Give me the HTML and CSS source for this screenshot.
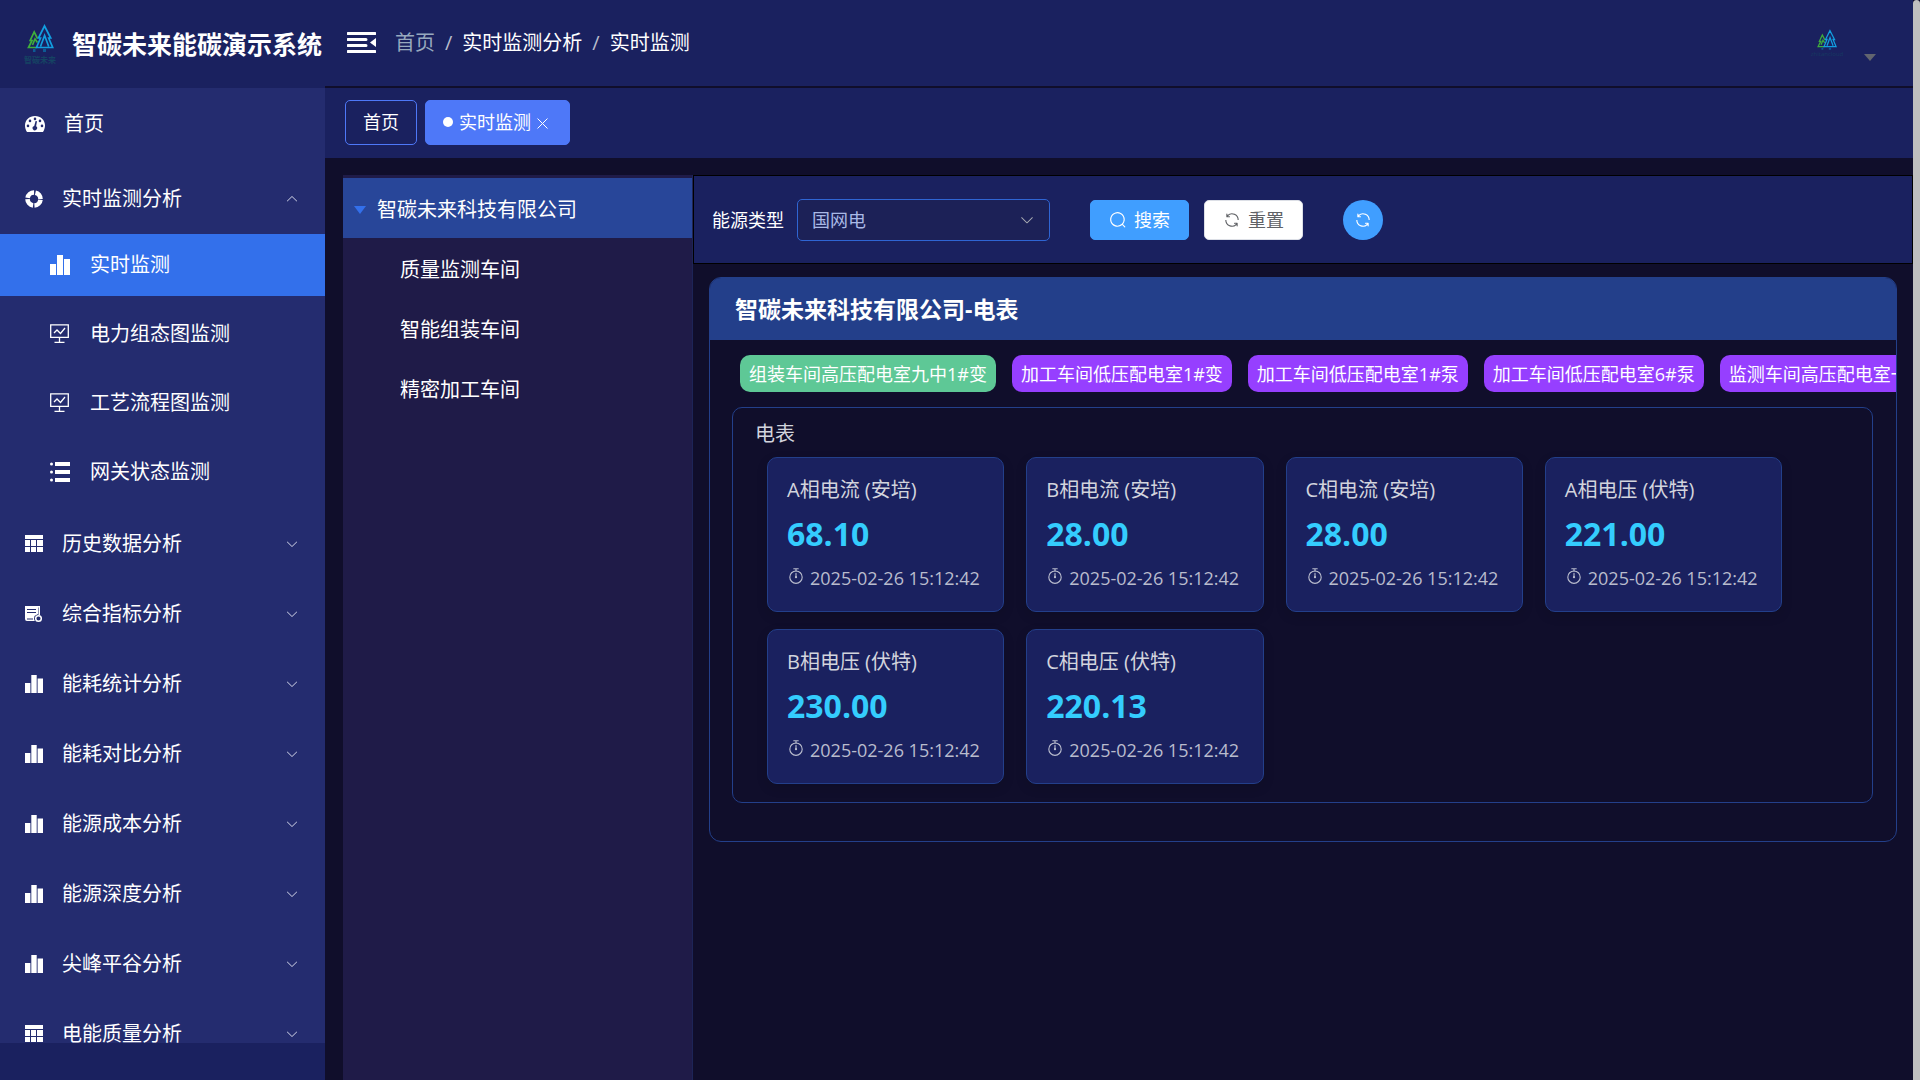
FILE: index.html
```html
<!DOCTYPE html>
<html lang="zh-CN">
<head>
<meta charset="utf-8">
<title>智碳未来能碳演示系统</title>
<link rel="stylesheet" href="styles.css">
</head>
<body>
<svg class="sprite" aria-hidden="true">
  <symbol id="i-down" viewBox="0 0 1024 1024"><path d="M831.872 340.864 512 652.672 192.128 340.864a30.592 30.592 0 0 0-42.752 0 29.12 29.12 0 0 0 0 41.6L489.664 714.24a32 32 0 0 0 44.672 0l340.288-331.712a29.12 29.12 0 0 0 0-41.728 30.592 30.592 0 0 0-42.752 0z"/></symbol>
  <symbol id="i-search" viewBox="0 0 1024 1024"><path d="m795.904 750.72 124.992 124.928a32 32 0 0 1-45.248 45.248L750.656 795.904a416 416 0 1 1 45.248-45.248zM480 832a352 352 0 1 0 0-704 352 352 0 0 0 0 704"/></symbol>
  <symbol id="i-refresh" viewBox="0 0 1024 1024"><path d="M771.776 794.88A384 384 0 0 1 128 512h64a320 320 0 0 0 555.712 216.448H654.72a32 32 0 1 1 0-64h149.056a32 32 0 0 1 32 32v148.928a32 32 0 1 1-64 0v-50.56zM276.288 295.616h92.992a32 32 0 0 1 0 64H220.16a32 32 0 0 1-32-32V178.56a32 32 0 0 1 64 0v50.56A384 384 0 0 1 896.128 512h-64a320 320 0 0 0-555.776-216.384z"/></symbol>
  <symbol id="i-timer" viewBox="0 0 1024 1024"><path d="M512 896a320 320 0 1 0 0-640 320 320 0 0 0 0 640m0 64a384 384 0 1 1 0-768 384 384 0 0 1 0 768"/><path d="M512 320a32 32 0 0 1 32 32l-.512 224a32 32 0 1 1-64 0L480 352a32 32 0 0 1 32-32"/><path d="M448 576a64 64 0 1 0 128 0 64 64 0 1 0-128 0m96-448v128h-64V128h-96a32 32 0 0 1 0-64h256a32 32 0 1 1 0 64z"/></symbol>
  <symbol id="i-bars" viewBox="0 0 20 20"><path d="M0 9h6v11H0zM7 0h6v20H7zM14 4h6v16h-6z"/></symbol>
  <symbol id="i-table" viewBox="0 0 18 18"><path d="M0 0h18v4H0zM0 5h5v6H0zM6 5h5v6H6zM12 5h6v6h-6zM0 12h5v5H0zM6 12h5v5H6zM12 12h6v5h-6z"/></symbol>
  <symbol id="i-ring" viewBox="0 0 18 18"><circle cx="9" cy="9" r="6.5" fill="none" stroke="currentColor" stroke-width="4.6" stroke-dasharray="8.8 1.41" stroke-dashoffset="-.7"/></symbol>
  <symbol id="i-gauge" viewBox="0 0 20 16"><path fill-rule="evenodd" d="M2 16C-3 8 2 0 10 0s13 8 8 16zM10 1.6a1.3 1.3 0 1 0 0 2.6 1.3 1.3 0 0 0 0-2.6M5 3.6a1.3 1.3 0 1 0 0 2.6 1.3 1.3 0 0 0 0-2.6m10 0a1.3 1.3 0 1 0 0 2.6 1.3 1.3 0 0 0 0-2.6M3 8.6a1.3 1.3 0 1 0 0 2.6 1.3 1.3 0 0 0 0-2.6m14 0a1.3 1.3 0 1 0 0 2.6 1.3 1.3 0 0 0 0-2.6M10.6 5 9.2 10a2.2 2.2 0 1 0 1.9.3L12 5.3z"/></symbol>
  <symbol id="i-board" viewBox="0 0 20 20"><path fill="none" stroke="currentColor" stroke-width="1.3" d="M.7.8h17.6v12.6H.7zM9.5 13.5v4.7M4.500 18.300h10M4 9l3-3 3.500 3.500L15 4"/></symbol>
  <symbol id="i-list" viewBox="0 0 20 20"><path d="M5 0h15v4H5zM5 8h15v4H5zM5 16h15v4H5z"/><circle cx="1.500" cy="2" r="1.500"/><circle cx="1.500" cy="10" r="1.500"/><circle cx="1.500" cy="18" r="1.500"/></symbol>
  <symbol id="i-doc" viewBox="0 0 18 18"><path fill-rule="evenodd" d="M0 1h15v9h-1.500V2.500H13V9L9.500 11l-.5 3 .8 2H2a2 2 0 0 1-2-2zM2 4v1h9V4zm0 3v1h9V7zm0 6.500v1h6v-1z"/><circle cx="13.500" cy="13.500" r="2.800" fill="none" stroke="currentColor" stroke-width="1.500"/></symbol>
  <symbol id="i-trees" viewBox="0 0 27 28">
    <g fill="none" stroke-width="1.700">
      <path stroke="#3fae3c" d="M10 23.500H1.500l3.500-7H3.200l4-8.500 3.300 6.500M5.500 21 8 15l2.500 3.500"/>
      <path stroke="#129ee0" d="M17.500 2 11.500 14h2L9.500 23.500h16.200L21.700 14h2zM13.500 22.500 17.600 11.500l4.100 11"/>
    </g>
    <path fill="#0d5a94" d="M6 25h2.500v3H6zM16 25h3v3h-3z"/>
  </symbol>
</svg>
<div class="app">
  <aside class="side">
    <div class="brand">
      <div class="logo"><svg><use href="#i-trees"/></svg><span>智碳未来</span></div>
      <h1>智碳未来能碳演示系统</h1>
    </div>
    <nav class="menu">
      <a class="item home" href="#"><svg class="ico"><use href="#i-gauge"/></svg><span>首页</span></a>
      <button class="item open" aria-expanded="true"><svg class="ico"><use href="#i-ring"/></svg><span>实时监测分析</span><svg class="arrow"><use href="#i-down"/></svg></button>
      <div class="sub">
        <a class="subitem active" href="#"><svg class="ico"><use href="#i-bars"/></svg><span>实时监测</span></a>
        <a class="subitem" href="#"><svg class="ico"><use href="#i-board"/></svg><span>电力组态图监测</span></a>
        <a class="subitem" href="#"><svg class="ico"><use href="#i-board"/></svg><span>工艺流程图监测</span></a>
        <a class="subitem" href="#"><svg class="ico"><use href="#i-list"/></svg><span>网关状态监测</span></a>
      </div>
      <button class="item"><svg class="ico"><use href="#i-table"/></svg><span>历史数据分析</span><svg class="arrow"><use href="#i-down"/></svg></button>
      <button class="item"><svg class="ico"><use href="#i-doc"/></svg><span>综合指标分析</span><svg class="arrow"><use href="#i-down"/></svg></button>
      <button class="item"><svg class="ico"><use href="#i-bars"/></svg><span>能耗统计分析</span><svg class="arrow"><use href="#i-down"/></svg></button>
      <button class="item"><svg class="ico"><use href="#i-bars"/></svg><span>能耗对比分析</span><svg class="arrow"><use href="#i-down"/></svg></button>
      <button class="item"><svg class="ico"><use href="#i-bars"/></svg><span>能源成本分析</span><svg class="arrow"><use href="#i-down"/></svg></button>
      <button class="item"><svg class="ico"><use href="#i-bars"/></svg><span>能源深度分析</span><svg class="arrow"><use href="#i-down"/></svg></button>
      <button class="item"><svg class="ico"><use href="#i-bars"/></svg><span>尖峰平谷分析</span><svg class="arrow"><use href="#i-down"/></svg></button>
      <button class="item"><svg class="ico"><use href="#i-table"/></svg><span>电能质量分析</span><svg class="arrow"><use href="#i-down"/></svg></button>
    </nav>
  </aside>
  <div class="main">
    <header class="top">
      <button class="fold" aria-label="折叠菜单"><svg viewBox="0 0 29 22"><path d="M1 0h27a1 1 0 0 1 0 3H1a1 1 0 0 1 0-3M1 6h18a1 1 0 0 1 0 3H1a1 1 0 0 1 0-3M1 12h18a1 1 0 0 1 0 3H1a1 1 0 0 1 0-3M1 18h27a1 1 0 0 1 0 3H1a1 1 0 0 1 0-3M29 6v9l-6-4.500z"/></svg></button>
      <nav class="crumbs"><a href="#">首页</a><i>/</i><span>实时监测分析</span><i>/</i><span>实时监测</span></nav>
      <button class="user" aria-label="用户菜单">
        <span class="avatar"><svg><use href="#i-trees"/></svg><span>zhitancloud</span></span>
        <span class="caret"></span>
      </button>
    </header>
    <div class="tabs">
      <a class="tab" href="#">首页</a>
      <a class="tab on" href="#"><span class="dot"></span>实时监测<svg class="close" viewBox="0 0 11 11"><path d="m.5.500 10 10m0-10-10 10"/></svg></a>
    </div>
    <div class="body">
      <ul class="tree">
        <li class="node root"><span class="caret"></span>智碳未来科技有限公司</li>
        <li class="node">质量监测车间</li>
        <li class="node">智能组装车间</li>
        <li class="node">精密加工车间</li>
      </ul>
      <div class="content">
        <form class="filter">
          <label for="energy">能源类型</label>
          <div class="select"><select id="energy"><option>国网电</option></select><svg><use href="#i-down"/></svg></div>
          <button type="button" class="btn primary"><svg><use href="#i-search"/></svg>搜索</button>
          <button type="button" class="btn plain"><svg><use href="#i-refresh"/></svg>重置</button>
          <button type="button" class="round" aria-label="刷新"><svg><use href="#i-refresh"/></svg></button>
        </form>
        <section class="card">
          <h2>智碳未来科技有限公司-电表</h2>
          <div class="meters">
            <button class="meter on">组装车间高压配电室九中1#变</button>
            <button class="meter">加工车间低压配电室1#变</button>
            <button class="meter">加工车间低压配电室1#泵</button>
            <button class="meter">加工车间低压配电室6#泵</button>
            <button class="meter">监测车间高压配电室一段进线</button>
          </div>
          <div class="panel">
            <h3>电表</h3>
            <div class="grid">
              <div class="stat"><p class="name">A相电流 (安培)</p><p class="value">68.10</p><p class="time"><svg><use href="#i-timer"/></svg>2025-02-26 15:12:42</p></div>
              <div class="stat"><p class="name">B相电流 (安培)</p><p class="value">28.00</p><p class="time"><svg><use href="#i-timer"/></svg>2025-02-26 15:12:42</p></div>
              <div class="stat"><p class="name">C相电流 (安培)</p><p class="value">28.00</p><p class="time"><svg><use href="#i-timer"/></svg>2025-02-26 15:12:42</p></div>
              <div class="stat"><p class="name">A相电压 (伏特)</p><p class="value">221.00</p><p class="time"><svg><use href="#i-timer"/></svg>2025-02-26 15:12:42</p></div>
              <div class="stat"><p class="name">B相电压 (伏特)</p><p class="value">230.00</p><p class="time"><svg><use href="#i-timer"/></svg>2025-02-26 15:12:42</p></div>
              <div class="stat"><p class="name">C相电压 (伏特)</p><p class="value">220.13</p><p class="time"><svg><use href="#i-timer"/></svg>2025-02-26 15:12:42</p></div>
            </div>
          </div>
        </section>
      </div>
    </div>
  </div>
  <div class="scroll"></div>
</div>
</body>
</html>
```
FILE: styles.css
```css
* { box-sizing: border-box; margin: 0; padding: 0; }
body {
  font: 20px/30px "Open Sans", "Noto Sans CJK SC", sans-serif;
  color: #fff;
  background: #100e2b;
  overflow: hidden;
}
a { color: inherit; text-decoration: none; }
button { font: inherit; color: inherit; background: none; border: 0; cursor: pointer; }
svg { fill: currentColor; flex: none; display: block; }
ul { list-style: none; }
.sprite { position: absolute; width: 0; height: 0; }

.app { display: flex; height: 100vh; }
.scroll { flex: none; width: 7px; background: #bfbfbf; border-radius: 4px 4px 0 0; }

/* sidebar */
.side { flex: none; width: 325px; display: flex; flex-direction: column; background: #1a215f; padding-bottom: 37px; }
.brand { flex: none; height: 88px; display: flex; align-items: center; gap: 15px; padding-left: 23px; }
.logo { width: 34px; display: flex; flex-direction: column; align-items: center; gap: 3px; color: #154463; font-size: 8px; line-height: 10px; font-weight: 700; }
.logo svg { width: 27px; height: 28px; }
.brand h1 { font-size: 25px; line-height: 36px; white-space: nowrap; }
.menu { flex: 1; min-height: 0; overflow: hidden; background: #242c6f; }
.item { width: 100%; height: 70px; display: flex; align-items: center; gap: 19px; padding: 0 26px 0 25px; text-align: left; }
.item .ico { width: 18px; height: 18px; }
.item.home { margin-bottom: 6px; padding-top: 2px; }
.item.home .ico { width: 20px; height: 16px; }
.arrow { width: 14px; height: 14px; margin-left: auto; color: #c8cbe0; }
.open .arrow { transform: rotate(180deg); }
.sub { display: flex; flex-direction: column; gap: 7px; padding-bottom: 6px; }
.subitem { height: 62px; display: flex; align-items: center; gap: 20px; padding-left: 50px; }
.subitem .ico { width: 20px; height: 20px; }
.subitem.active { background: #3370eb; }

/* header */
.main { flex: 1; min-width: 0; display: flex; flex-direction: column; }
.top { flex: none; height: 88px; display: flex; align-items: center; padding: 0 37px 0 22px; background: #1a215f; border-bottom: 2px solid #100e2b; }
.fold svg { width: 29px; height: 22px; }
.crumbs { display: flex; margin-left: 19px; gap: 10px; }
.crumbs a { color: #97a8be; }
.crumbs i { font-style: normal; color: #b8bccb; }
.user { margin-left: auto; display: flex; align-items: center; gap: 20px; }
.avatar { width: 34px; display: flex; flex-direction: column; align-items: center; color: #163a62; font-size: 6px; line-height: 8px; }
.avatar svg { width: 20px; height: 21px; }
.caret { flex: none; border: 6px solid transparent; border-top: 7px solid #62656f; border-bottom: 0; }
.user .caret { margin-top: 28px; }
.tabs { flex: none; height: 70px; display: flex; align-items: center; gap: 8px; padding: 0 20px 2px; background: #1a215f; }
.tab { height: 45px; display: flex; align-items: center; padding: 0 17px; border: 1px solid #4e78f8; border-radius: 5px; font-size: 18px; }
.tab.on { background: #4e78f8; gap: 6px; padding-right: 21px; }
.dot { width: 10px; height: 10px; border-radius: 50%; background: #fff; }
.close { width: 11px; height: 11px; stroke: #fff; margin-top: 2px; }

/* tree */
.body { flex: 1; min-height: 0; display: flex; padding: 17px 0 0 18px; }
.tree { flex: none; width: 350px; padding-top: 3px; background: #1f1b48; border-right: 1px solid #1d2457; }
.node { height: 60px; display: flex; align-items: center; padding: 3px 0 0 57px; }
.node.root { gap: 11px; padding-left: 11px; background: #284699; }
.root .caret { border-width: 8px 6px 0; border-top-color: #3370eb; }

/* filter */
.content { flex: 1; min-width: 0; }
.filter { height: 89px; display: flex; align-items: center; padding-left: 18px; font-size: 18px; background: #1a215f; border: 1px solid #000; }
.filter label { margin-right: 13px; }
.select { display: grid; align-items: center; width: 253px; margin-right: 40px; }
.select select { grid-area: 1 / 1; height: 42px; padding: 0 14px; appearance: none; font: inherit; color: #a9b9e6; background: #1c2157; border: 1px solid #2f65d3; border-radius: 5px; }
.select svg { grid-area: 1 / 1; justify-self: end; width: 16px; height: 16px; margin-right: 15px; color: #a8abb2; pointer-events: none; }
.btn { height: 40px; display: flex; align-items: center; gap: 7px; padding: 0 18px; border: 1px solid; border-radius: 5px; }
.btn svg, .round svg { width: 18px; height: 18px; }
.primary { background: #409eff; border-color: #409eff; margin-right: 15px; }
.plain { background: #fff; border-color: #dcdfe6; color: #606266; margin-right: 40px; }
.round { width: 40px; height: 40px; display: grid; place-items: center; background: #409eff; border-radius: 50%; }

/* meter card */
.card { margin: 13px 16px; padding-bottom: 38px; border: 1px solid #233f8a; border-radius: 12px; overflow: hidden; }
.card h2 { padding: 0 25px; font-size: 23px; line-height: 62px; background: #233f8a; }
.meters { display: flex; gap: 16px; padding: 15px 0 15px 30px; overflow: hidden; }
.meter { flex: none; height: 37px; padding: 0 9px; border-radius: 10px; font-size: 18px; background: #963fff; white-space: nowrap; }
.meter.on { background: #5ec896; }
.panel { margin: 0 23px 0 22px; padding: 11px 90px 18px 34px; border: 1px solid #233f8a; border-radius: 10px; color: #d2d4dd; }
.panel h3 { font-size: 20px; font-weight: 400; margin: 0 0 8px -12px; }
.grid { display: grid; grid-template-columns: repeat(4, 1fr); gap: 17px 22px; }
.stat { padding: 17px 18px 18px 19px; background: #1a215f; border: 1px solid #233f8a; border-radius: 10px; box-shadow: 0 4px 12px rgba(0, 0, 0, .12); white-space: nowrap; }
.value { font-size: 32px; line-height: 58px; font-weight: 700; color: #34cdfe; }
.time { display: flex; gap: 5px; font-size: 18px; line-height: 30px; color: #b9bccd; }
.time svg { width: 18px; height: 18px; margin-top: 4px; }
```
